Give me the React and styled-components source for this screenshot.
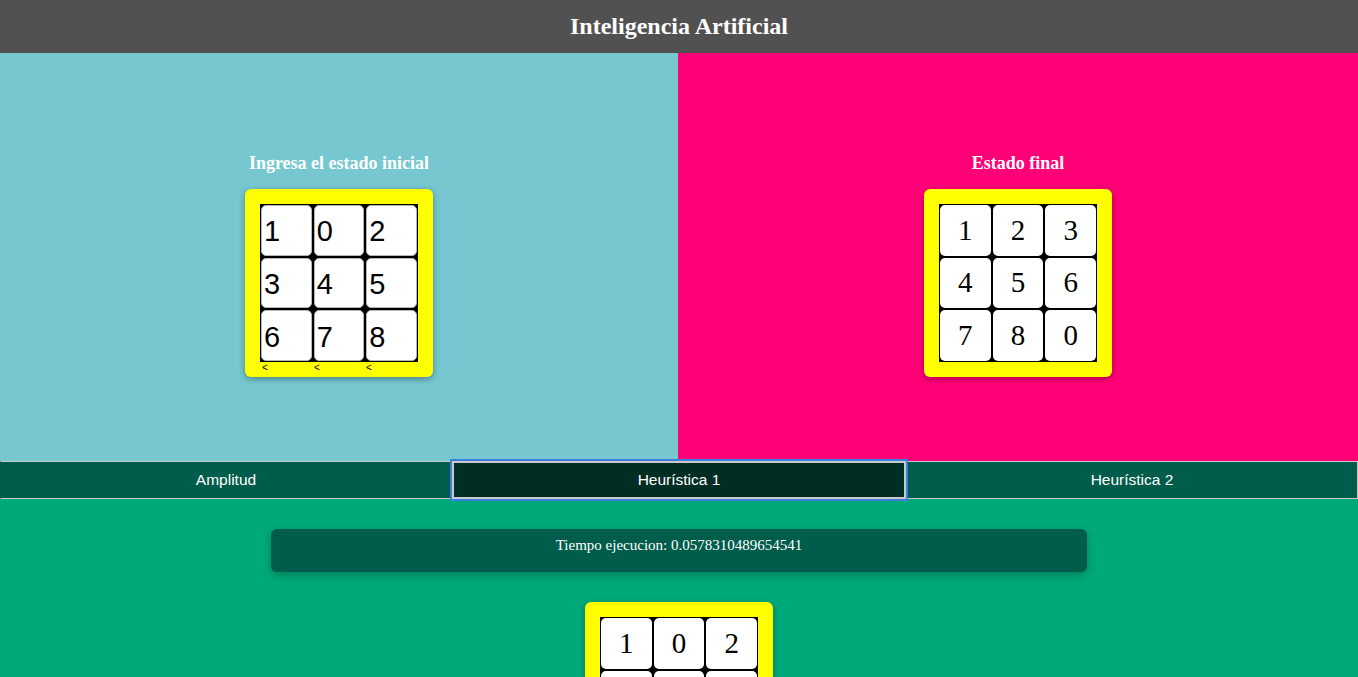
import React from "react";
import styled, { createGlobalStyle, css } from "styled-components";

const GlobalStyle = createGlobalStyle`
    body {
        margin: 0;
        font-family: "Liberation Serif", "Times New Roman", serif;
        background-color: #00a97a;
    }
`;

const initial = [1, 0, 2, 3, 4, 5, 6, 7, 8];
const goal = [1, 2, 3, 4, 5, 6, 7, 8, 0];
const tabs = ["Amplitud", "Heurística 1", "Heurística 2"];

const App = () => {
    return (
        <Page>
            <GlobalStyle />
            <Header>Inteligencia Artificial</Header>
            <Panels>
                <Panel color="#76c7cf" width="678px">
                    <PanelTitle>Ingresa el estado inicial</PanelTitle>
                    <Board bottom={0}>
                        <Grid>
                            {initial.map((n, i) => (
                                <CellInput key={i} value={n} readOnly />
                            ))}
                        </Grid>
                        <Arrows>
                            <span>&lt;</span>
                            <span>&lt;</span>
                            <span>&lt;</span>
                        </Arrows>
                    </Board>
                </Panel>
                <Panel color="#ff0077">
                    <PanelTitle>Estado final</PanelTitle>
                    <Board>
                        <Grid>
                            {goal.map((n, i) => (
                                <Tile key={i}>{n}</Tile>
                            ))}
                        </Grid>
                    </Board>
                </Panel>
            </Panels>
            <TabBar>
                {tabs.map((t, i) => (
                    <Tab key={t} active={i === 1}>
                        {t}
                    </Tab>
                ))}
            </TabBar>
            <Results>
                <TimeCard>Tiempo ejecucion: 0.0578310489654541</TimeCard>
                <Board>
                    <Grid>
                        {initial.map((n, i) => (
                            <Tile key={i}>{n}</Tile>
                        ))}
                    </Grid>
                </Board>
            </Results>
        </Page>
    );
};

const Page = styled.div`
    min-height: 100vh;
    background-color: #00a97a;
`;
const Header = styled.h1`
    margin: 0;
    height: 53px;
    line-height: 53px;
    background-color: #515151;
    color: #fff;
    text-align: center;
    font-size: 24px;
    font-weight: bold;
`;
const Panels = styled.div`
    display: flex;
`;
const Panel = styled.section`
    flex: ${(p) => (p.width ? "none" : 1)};
    width: ${(p) => p.width || "auto"};
    height: 408px;
    box-sizing: border-box;
    padding-top: 99px;
    background-color: ${(p) => p.color};
    display: flex;
    flex-direction: column;
    align-items: center;
`;
const PanelTitle = styled.h3`
    margin: 0 0 15px;
    font-size: 18px;
    line-height: 22px;
    color: #fff;
`;
const Board = styled.div`
    width: 188px;
    box-sizing: border-box;
    padding: 15px 15px ${(p) => (p.bottom !== undefined ? p.bottom : 15)}px;
    background-color: #ffff00;
    border-radius: 6px;
    box-shadow: 0 2px 6px rgba(0, 0, 0, 0.35);
`;
const Grid = styled.div`
    width: 158px;
    height: 158px;
    box-sizing: border-box;
    padding: 1px;
    background-color: #000;
    display: grid;
    grid-template-columns: repeat(3, 1fr);
    grid-template-rows: repeat(3, 1fr);
    gap: 2px;
`;
const tileBase = css`
    background-color: #fff;
    border-radius: 5px;
    box-sizing: border-box;
    min-width: 0;
    width: 100%;
    height: 100%;
`;
const Tile = styled.div`
    ${tileBase};
    display: flex;
    align-items: center;
    justify-content: center;
    font-family: "Liberation Serif", "Times New Roman", serif;
    font-size: 29px;
    color: #000;
`;
const CellInput = styled.input`
    ${tileBase};
    margin: 0;
    padding: 3px 0 0 2px;
    border: 1px solid #b5b5b5;
    font-family: "Liberation Sans", Arial, sans-serif;
    font-size: 29px;
    color: #000;
    outline: none;
`;
const Arrows = styled.div`
    height: 15px;
    display: grid;
    grid-template-columns: repeat(3, 1fr);
    width: 158px;
    font-family: "Liberation Sans", Arial, sans-serif;
    font-size: 10px;
    line-height: 12px;
    padding-left: 2px;
    box-sizing: border-box;
    color: #000;
`;
const TabBar = styled.nav`
    display: flex;
    background-color: #005c4b;
`;
const Tab = styled.button`
    flex: 1;
    height: 38px;
    margin: 0;
    border: 1px solid #c9c9c9;
    border-left-color: #005c4b;
    border-right-color: #c9c9c9;
    background-color: #005c4b;
    color: #fff;
    font-family: "Liberation Sans", Arial, sans-serif;
    font-size: 15.5px;
    cursor: pointer;
    ${(p) =>
        p.active &&
        css`
            background-color: #002e25;
            border: 2px solid #c9c9c9;
            outline: 2px solid #3a7fe0;
            outline-offset: 0;
            position: relative;
            z-index: 1;
        `}
`;
const Results = styled.div`
    display: flex;
    flex-direction: column;
    align-items: center;
    padding: 30px 0 40px;
    gap: 30px;
`;
const TimeCard = styled.div`
    width: 816px;
    height: 43px;
    box-sizing: border-box;
    padding-top: 7px;
    background-color: #005c4b;
    border-radius: 6px;
    box-shadow: 0 3px 8px rgba(0, 0, 0, 0.25);
    color: #fff;
    text-align: center;
    font-size: 15px;
    line-height: 18px;
`;

export default App;
